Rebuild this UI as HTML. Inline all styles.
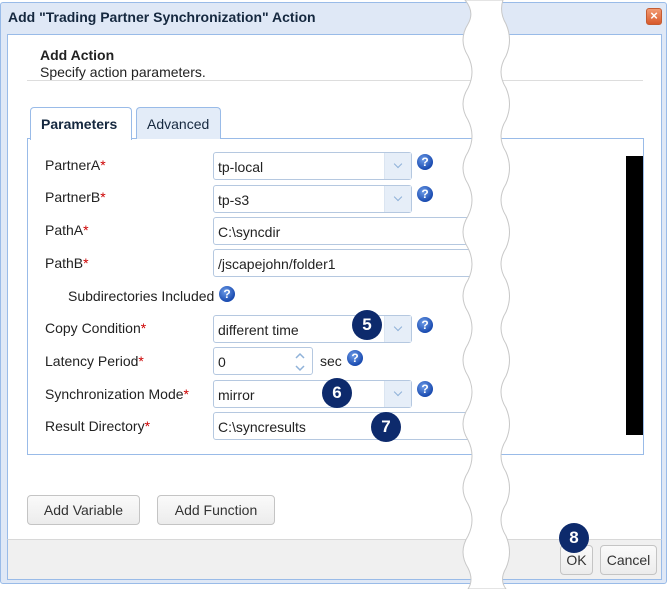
<!DOCTYPE html>
<html><head><style>
*{box-sizing:border-box;margin:0;padding:0}
body{width:670px;height:589px;background:#fff;font-family:"Liberation Sans",Arial,sans-serif;font-size:14px;color:#222;position:relative;overflow:hidden}
.abs{position:absolute}
.dlg{left:0;top:2px;width:667px;height:582px;border:1px solid #99bbe8;background:#dfe8f6;border-radius:3px}
.title{left:8px;top:9px;font-weight:bold;font-size:14px;color:#15283f}
.close{left:646px;top:8px;width:16px;height:17px;background:linear-gradient(#f29a72,#d85a2c);border:1px solid #c45c32;border-radius:3px;color:#fff;font-size:13px;line-height:14px;text-align:center;font-weight:bold}
.body{left:7px;top:34px;width:655px;height:505px;background:#fff;border:1px solid #99bbe8;border-bottom:none}
.foot{left:7px;top:539px;width:655px;height:41px;background:#f0f0f0;border:1px solid #99bbe8;border-top:1px solid #d8d8d8}
.hdr{left:40px;top:47px;font-weight:bold;font-size:14px}
.sub{left:40px;top:64px;font-size:14px}
.sep{left:27px;top:80px;width:616px;height:1px;background:#ddd}
.tab{top:107px;height:32px;border:1px solid #99bbe8;border-bottom:none;border-radius:4px 4px 0 0;padding:8px 10px;font-size:14px}
.panel{left:27px;top:138px;width:617px;height:317px;border:1px solid #99bbe8}
.lbl{left:45px;font-size:14px}
.lbl b{color:#c00;font-weight:normal}
.inp{left:213px;height:28px;border:1px solid #b5c8e0;border-radius:3px;background:#fff;padding:6px 4px;font-size:14px}
.trg{position:absolute;right:0;top:0;width:27px;height:26px;background:#e6eef8;border-left:1px solid #dbe5f1}
.trg:after{content:"";position:absolute;left:10px;top:8px;width:5px;height:5px;border-right:1.5px solid #8fb2d9;border-bottom:1.5px solid #8fb2d9;transform:rotate(45deg)}
.help{width:16px;height:16px;border-radius:50%;background:radial-gradient(circle at 40% 35%,#6d9ce8,#1a4bb0 70%);color:#fff;font-size:12px;font-weight:bold;text-align:center;line-height:16px}
.badge{width:30px;height:30px;border-radius:50%;background:#0d2a6c;color:#fff;font-weight:bold;font-size:17px;text-align:center;line-height:30px}
.btn{height:30px;border:1px solid #c4c4c4;border-radius:4px;background:linear-gradient(#fafafa,#ececec);font-size:14px;text-align:center;line-height:28px;color:#333}
</style></head><body>
<div class="abs dlg"></div>
<div class="abs title">Add "Trading Partner Synchronization" Action</div>
<div class="abs close">×</div>
<div class="abs body"></div>
<div class="abs foot"></div>
<div class="abs hdr">Add Action</div>
<div class="abs sub">Specify action parameters.</div>
<div class="abs sep"></div>
<div class="abs panel"></div>
<div class="abs tab" style="left:30px;width:102px;background:#fff;font-weight:bold;color:#15283f;height:33px">Parameters</div>
<div class="abs tab" style="left:136px;width:85px;background:#e3ecf8;color:#15283f">Advanced</div>

<div class="abs lbl" style="top:157px">PartnerA<b>*</b></div>
<div class="abs inp" style="top:152px;width:199px">tp-local<span class="trg"></span></div>
<div class="abs help" style="left:417px;top:154px">?</div>
<div class="abs lbl" style="top:189px">PartnerB<b>*</b></div>
<div class="abs inp" style="top:185px;width:199px">tp-s3<span class="trg"></span></div>
<div class="abs help" style="left:417px;top:186px">?</div>
<div class="abs lbl" style="top:222px">PathA<b>*</b></div>
<div class="abs inp" style="top:217px;width:270px">C:\syncdir</div>
<div class="abs lbl" style="top:255px">PathB<b>*</b></div>
<div class="abs inp" style="top:249px;width:270px">/jscapejohn/folder1</div>
<div class="abs lbl" style="left:68px;top:288px">Subdirectories Included</div>
<div class="abs help" style="left:219px;top:286px">?</div>
<div class="abs lbl" style="top:320px">Copy Condition<b>*</b></div>
<div class="abs inp" style="top:315px;width:199px">different time<span class="trg"></span></div>
<div class="abs help" style="left:417px;top:317px">?</div>
<div class="abs lbl" style="top:353px">Latency Period<b>*</b></div>
<div class="abs inp" style="top:347px;width:100px">0</div>
<svg class="abs" style="left:292px;top:350px" width="16" height="24"><path d="M4 8 L8 4 L12 8 M4 16 L8 20 L12 16" fill="none" stroke="#8fb2d9" stroke-width="1.5"/></svg>
<div class="abs lbl" style="left:320px;top:353px">sec</div>
<div class="abs help" style="left:347px;top:350px">?</div>
<div class="abs lbl" style="top:386px">Synchronization Mode<b>*</b></div>
<div class="abs inp" style="top:380px;width:199px">mirror<span class="trg"></span></div>
<div class="abs help" style="left:417px;top:381px">?</div>
<div class="abs lbl" style="top:418px">Result Directory<b>*</b></div>
<div class="abs inp" style="top:412px;width:270px">C:\syncresults</div>

<div class="abs" style="left:626px;top:156px;width:17px;height:279px;background:#000"></div>

<div class="abs btn" style="left:27px;top:495px;width:113px">Add Variable</div>
<div class="abs btn" style="left:157px;top:495px;width:118px">Add Function</div>
<div class="abs btn" style="left:560px;top:545px;width:33px">OK</div>
<div class="abs btn" style="left:600px;top:545px;width:57px">Cancel</div>

<svg class="abs" style="left:455px;top:0" width="65" height="589">
<path d="M10 0 Q20 12 13 24 Q3 40 13 56 Q21 72 13 88 Q3 104 13 120 Q21 136 13 152 Q3 168 13 184 Q21 200 13 216 Q3 232 13 248 Q21 264 13 280 Q3 296 13 312 Q21 328 13 344 Q3 360 13 376 Q21 392 13 408 Q3 424 13 440 Q21 456 13 472 Q3 488 13 504 Q21 520 13 536 Q3 552 13 568 Q19 580 13 589 L51 589 Q44 580 51 568 Q58 552 51 536 Q41 520 51 504 Q58 488 51 472 Q41 456 51 440 Q58 424 51 408 Q41 392 51 376 Q58 360 51 344 Q41 328 51 312 Q58 296 51 280 Q41 264 51 248 Q58 232 51 216 Q41 200 51 184 Q58 168 51 152 Q41 136 51 120 Q58 104 51 88 Q41 72 51 56 Q58 40 51 24 Q44 12 48 0 Z" fill="#fff" stroke="#c8c8c8" stroke-width="1"/>
<rect x="9" y="-2" width="40" height="2" fill="#fff"/>
</svg>

<div class="abs badge" style="left:352px;top:310px">5</div>
<div class="abs badge" style="left:322px;top:378px">6</div>
<div class="abs badge" style="left:371px;top:412px">7</div>
<div class="abs badge" style="left:559px;top:523px">8</div>
</body></html>
